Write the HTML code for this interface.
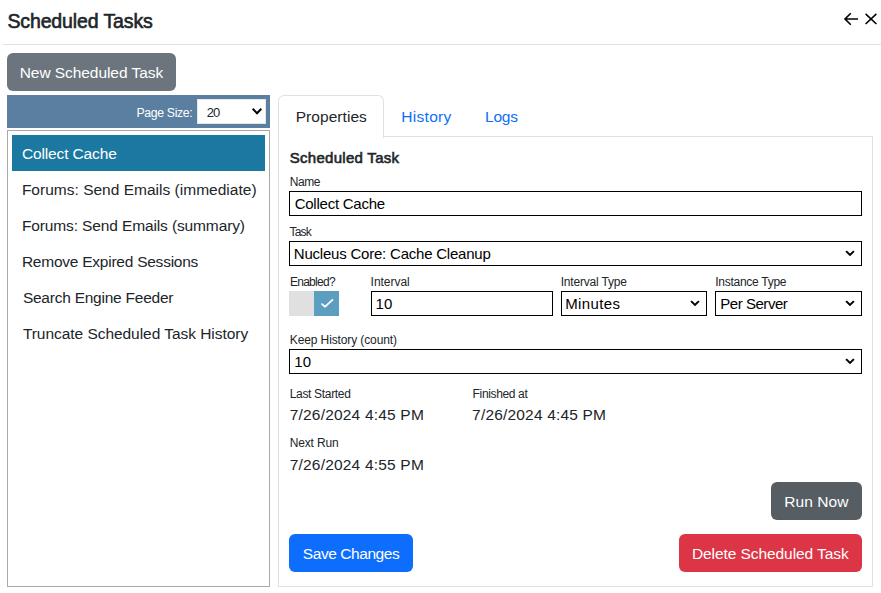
<!DOCTYPE html>
<html><head><meta charset="utf-8"><style>
html,body{margin:0;padding:0;width:881px;height:593px;overflow:hidden;background:#fff;position:relative}
.abs{position:absolute}
.t{position:absolute;white-space:nowrap;font-family:"Liberation Sans", sans-serif}
.inp{position:absolute;box-sizing:border-box;border:1px solid #000;background:#fff}
</style></head><body>

<div class="abs" style="left:3px;top:44px;width:878px;height:1px;background:#dee2e6"></div>
<svg class="abs" style="left:840px;top:9px" width="22" height="20" viewBox="0 0 22 20"><path d="M5 10 H18 M10.8 4.2 L5 10 L10.8 15.8" fill="none" stroke="#000" stroke-width="1.6"/></svg>
<svg class="abs" style="left:861px;top:9px" width="20" height="20" viewBox="0 0 20 20"><path d="M4.6 4.8 L15.4 15 M15.4 4.8 L4.6 15" fill="none" stroke="#000" stroke-width="1.6"/></svg>
<div class="abs" style="left:7px;top:53px;width:169px;height:38px;background:#6c757d;border-radius:6px"></div>
<div class="abs" style="left:7px;top:95px;width:263px;height:33px;background:#5b7fa1"></div>
<div class="abs" style="left:197px;top:99px;width:69px;height:25px;background:#fff;box-sizing:border-box;border:1px solid #e6e6e6"></div>
<svg class="abs" style="left:251px;top:106.2px" width="12" height="10" viewBox="0 0 12 10"><path d="M1.7000000000000002 2.8 L6 7.2 L10.3 2.8" fill="none" stroke="#000" stroke-width="2"/></svg>
<div class="abs" style="left:7px;top:130px;width:263px;height:457px;box-sizing:border-box;border:1px solid #a9a9a9"></div>
<div class="abs" style="left:12px;top:135px;width:253px;height:36px;background:#1b78a0"></div>
<div class="abs" style="left:278px;top:137px;width:595px;height:450px;box-sizing:border-box;border:1px solid #dee2e6;border-top:none"></div>
<div class="abs" style="left:383px;top:136px;width:490px;height:1px;background:#dee2e6"></div>
<div class="abs" style="left:278px;top:95px;width:106px;height:43px;box-sizing:border-box;border:1px solid #dee2e6;border-bottom:none;border-radius:6px 6px 0 0;background:#fff"></div>
<div class="inp" style="left:289px;top:191px;width:573px;height:25px"></div>
<div class="inp" style="left:289px;top:241px;width:573px;height:25px"></div>
<svg class="abs" style="left:843.8px;top:248.3px" width="12" height="10" viewBox="0 0 12 10"><path d="M2.1 3.1 L6 6.9 L9.9 3.1" fill="none" stroke="#000" stroke-width="2"/></svg>
<div class="abs" style="left:289px;top:291px;width:25px;height:25px;background:#e0e0e0"></div>
<div class="abs" style="left:314px;top:291px;width:25px;height:25px;background:#5b9ec0"></div>
<svg class="abs" style="left:314px;top:291px" width="25" height="25" viewBox="0 0 25 25"><path d="M8 13.1 L11.1 15.7 L18.5 8.8" fill="none" stroke="#fff" stroke-width="1.8" stroke-linecap="round" stroke-linejoin="round"/></svg>
<div class="inp" style="left:371px;top:291px;width:182px;height:25px"></div>
<div class="inp" style="left:561px;top:291px;width:146px;height:25px"></div>
<svg class="abs" style="left:688.8px;top:298.3px" width="12" height="10" viewBox="0 0 12 10"><path d="M2.1 3.1 L6 6.9 L9.9 3.1" fill="none" stroke="#000" stroke-width="2"/></svg>
<div class="inp" style="left:715px;top:291px;width:147px;height:25px"></div>
<svg class="abs" style="left:843.8px;top:298.3px" width="12" height="10" viewBox="0 0 12 10"><path d="M2.1 3.1 L6 6.9 L9.9 3.1" fill="none" stroke="#000" stroke-width="2"/></svg>
<div class="inp" style="left:289px;top:349px;width:573px;height:25px"></div>
<svg class="abs" style="left:843.8px;top:356.3px" width="12" height="10" viewBox="0 0 12 10"><path d="M2.1 3.1 L6 6.9 L9.9 3.1" fill="none" stroke="#000" stroke-width="2"/></svg>
<div class="abs" style="left:771px;top:482px;width:91px;height:38px;background:#565e64;border-radius:6px"></div>
<div class="abs" style="left:289px;top:534px;width:124px;height:38px;background:#0d6efd;border-radius:6px"></div>
<div class="abs" style="left:679px;top:534px;width:183px;height:38px;background:#dc3545;border-radius:6px"></div>

<div class="t" style="left:7.40px;top:12.09px;font-size:19.5px;line-height:19.5px;color:#212529;-webkit-text-stroke:0.6px #212529;letter-spacing:-0.119px;">Scheduled Tasks</div>
<div class="t" style="left:19.70px;top:65.18px;font-size:15.5px;line-height:15.5px;color:#ffffff;letter-spacing:-0.059px;">New Scheduled Task</div>
<div class="t" style="left:136.50px;top:107.19px;font-size:12.3px;line-height:12.3px;color:#ffffff;letter-spacing:-0.362px;">Page Size:</div>
<div class="t" style="left:206.80px;top:105.79px;font-size:13px;line-height:13px;color:#212529;letter-spacing:-1.030px;">20</div>
<div class="t" style="left:21.90px;top:145.58px;font-size:15.5px;line-height:15.5px;color:#ffffff;letter-spacing:-0.131px;">Collect Cache</div>
<div class="t" style="left:21.90px;top:181.88px;font-size:15.5px;line-height:15.5px;color:#212529;letter-spacing:0.013px;">Forums: Send Emails (immediate)</div>
<div class="t" style="left:21.90px;top:217.88px;font-size:15.5px;line-height:15.5px;color:#212529;letter-spacing:-0.123px;">Forums: Send Emails (summary)</div>
<div class="t" style="left:21.90px;top:253.88px;font-size:15.5px;line-height:15.5px;color:#212529;letter-spacing:-0.242px;">Remove Expired Sessions</div>
<div class="t" style="left:22.90px;top:289.88px;font-size:15.5px;line-height:15.5px;color:#212529;letter-spacing:-0.239px;">Search Engine Feeder</div>
<div class="t" style="left:22.90px;top:325.88px;font-size:15.5px;line-height:15.5px;color:#212529;letter-spacing:-0.044px;">Truncate Scheduled Task History</div>
<div class="t" style="left:295.70px;top:108.88px;font-size:15.5px;line-height:15.5px;color:#212529;letter-spacing:0.056px;">Properties</div>
<div class="t" style="left:401.30px;top:108.88px;font-size:15.5px;line-height:15.5px;color:#0d6efd;letter-spacing:0.287px;">History</div>
<div class="t" style="left:485.00px;top:108.88px;font-size:15.5px;line-height:15.5px;color:#0d6efd;letter-spacing:-0.187px;">Logs</div>
<div class="t" style="left:289.80px;top:150.10px;font-size:15px;line-height:15px;color:#212529;-webkit-text-stroke:0.6px #212529;letter-spacing:0.277px;">Scheduled Task</div>
<div class="t" style="left:289.80px;top:175.84px;font-size:12px;line-height:12px;color:#212529;letter-spacing:-0.445px;">Name</div>
<div class="t" style="left:294.70px;top:196.00px;font-size:15px;line-height:15px;color:#000000;letter-spacing:-0.245px;">Collect Cache</div>
<div class="t" style="left:289.50px;top:225.84px;font-size:12px;line-height:12px;color:#212529;letter-spacing:-0.825px;">Task</div>
<div class="t" style="left:293.80px;top:245.60px;font-size:15px;line-height:15px;color:#000000;letter-spacing:-0.214px;">Nucleus Core: Cache Cleanup</div>
<div class="t" style="left:289.90px;top:275.54px;font-size:12px;line-height:12px;color:#212529;letter-spacing:-0.720px;">Enabled?</div>
<div class="t" style="left:370.60px;top:275.54px;font-size:12px;line-height:12px;color:#212529;letter-spacing:-0.027px;">Interval</div>
<div class="t" style="left:560.70px;top:275.54px;font-size:12px;line-height:12px;color:#212529;letter-spacing:-0.186px;">Interval Type</div>
<div class="t" style="left:715.20px;top:275.54px;font-size:12px;line-height:12px;color:#212529;letter-spacing:-0.262px;">Instance Type</div>
<div class="t" style="left:375.60px;top:296.10px;font-size:15px;line-height:15px;color:#000000;letter-spacing:0.158px;">10</div>
<div class="t" style="left:565.20px;top:296.10px;font-size:15px;line-height:15px;color:#000000;letter-spacing:0.380px;">Minutes</div>
<div class="t" style="left:720.30px;top:296.10px;font-size:15px;line-height:15px;color:#000000;letter-spacing:-0.466px;">Per Server</div>
<div class="t" style="left:289.80px;top:334.14px;font-size:12px;line-height:12px;color:#212529;letter-spacing:-0.115px;">Keep History (count)</div>
<div class="t" style="left:294.30px;top:353.80px;font-size:15px;line-height:15px;color:#000000;letter-spacing:0.158px;">10</div>
<div class="t" style="left:289.70px;top:387.64px;font-size:12px;line-height:12px;color:#212529;letter-spacing:-0.321px;">Last Started</div>
<div class="t" style="left:472.60px;top:387.64px;font-size:12px;line-height:12px;color:#212529;letter-spacing:-0.357px;">Finished at</div>
<div class="t" style="left:289.70px;top:407.18px;font-size:15.5px;line-height:15.5px;color:#212529;letter-spacing:0.195px;">7/26/2024 4:45 PM</div>
<div class="t" style="left:472.10px;top:407.18px;font-size:15.5px;line-height:15.5px;color:#212529;letter-spacing:0.183px;">7/26/2024 4:45 PM</div>
<div class="t" style="left:289.70px;top:436.64px;font-size:12px;line-height:12px;color:#212529;letter-spacing:-0.135px;">Next Run</div>
<div class="t" style="left:289.70px;top:456.78px;font-size:15.5px;line-height:15.5px;color:#212529;letter-spacing:0.195px;">7/26/2024 4:55 PM</div>
<div class="t" style="left:784.30px;top:494.28px;font-size:15.5px;line-height:15.5px;color:#ffffff;letter-spacing:0.074px;">Run Now</div>
<div class="t" style="left:302.80px;top:545.68px;font-size:15.5px;line-height:15.5px;color:#ffffff;letter-spacing:-0.430px;">Save Changes</div>
<div class="t" style="left:691.90px;top:546.18px;font-size:15.5px;line-height:15.5px;color:#ffffff;letter-spacing:-0.070px;">Delete Scheduled Task</div>
</body></html>
